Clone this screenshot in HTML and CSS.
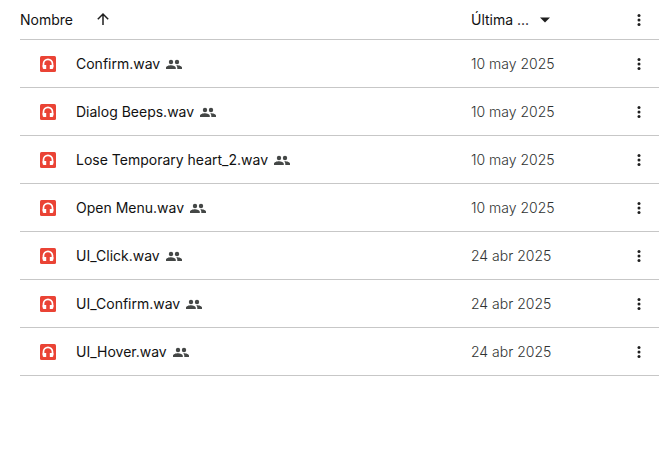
FILE: index.html
```html
<!DOCTYPE html>
<html lang="es">
<head>
<meta charset="utf-8">
<meta name="viewport" content="width=device-width, initial-scale=1">
<title>Archivos</title>
<link rel="stylesheet" href="styles.css">
</head>
<body>
<svg class="sprite" aria-hidden="true">
  <symbol id="audio" viewBox="0 0 16 16">
    <rect width="16" height="16" rx="1.5" fill="#ea4335"/>
    <path d="M3.500 11V7.800a4.500 4.500 0 0 1 9 0V11" fill="none" stroke="#fff" stroke-width="1.700"/>
    <path d="M2.650 9H6.200V13H4.100A1.450 1.450 0 0 1 2.650 11.500ZM9.800 9h3.550v2.500A1.450 1.450 0 0 1 11.900 13H9.800Z" fill="#fff"/>
  </symbol>
  <symbol id="people" viewBox="0 0 16 16">
    <circle cx="5" cy="6" r="2.200"/>
    <circle cx="11" cy="6" r="2.200"/>
    <path d="M0 13v-1.300C0 10.200 2.800 9.300 5 9.300s4.800.9 4.800 2.400V13ZM10.600 9.300c2.300-.1 5.400.8 5.400 2.400V13h-4.700v-1.300c0-1-.3-1.700-1-2.300Z"/>
  </symbol>
  <symbol id="dots" viewBox="0 0 16 16">
    <circle cx="8" cy="3.500" r="1.500"/><circle cx="8" cy="8" r="1.500"/><circle cx="8" cy="12.500" r="1.500"/>
  </symbol>
</svg>
<table class="files">
  <thead>
    <tr>
      <th scope="col"><div class="heading"><button class="sort">Nombre</button><button class="icon-button" aria-label="Orden ascendente"><svg class="arrow" viewBox="0 0 16 16"><path d="M8 13V2.500M2.800 7.200 8 2 13.200 7.200"/></svg></button></div></th>
      <th scope="col" class="date"><div class="heading modified"><button class="sort">Última ...</button><button class="icon-button" aria-label="Opciones de fecha"><svg class="icon" viewBox="0 0 16 16"><path d="M3 5.500h10L8 10.500Z"/></svg></button></div></th>
      <th scope="col" class="actions"><button class="icon-button" aria-label="Más opciones"><svg class="icon"><use href="#dots"/></svg></button></th>
    </tr>
  </thead>
  <tbody>
    <tr><td><div class="file"><svg class="type"><use href="#audio"/></svg><span>Confirm.wav</span><svg class="shared"><use href="#people"/></svg></div></td><td class="date">10 may 2025</td><td class="actions"><button class="icon-button" aria-label="Acciones de Confirm.wav"><svg class="icon"><use href="#dots"/></svg></button></td></tr>
    <tr><td><div class="file"><svg class="type"><use href="#audio"/></svg><span>Dialog Beeps.wav</span><svg class="shared"><use href="#people"/></svg></div></td><td class="date">10 may 2025</td><td class="actions"><button class="icon-button" aria-label="Acciones de Dialog Beeps.wav"><svg class="icon"><use href="#dots"/></svg></button></td></tr>
    <tr><td><div class="file"><svg class="type"><use href="#audio"/></svg><span>Lose Temporary heart_2.wav</span><svg class="shared"><use href="#people"/></svg></div></td><td class="date">10 may 2025</td><td class="actions"><button class="icon-button" aria-label="Acciones de Lose Temporary heart_2.wav"><svg class="icon"><use href="#dots"/></svg></button></td></tr>
    <tr><td><div class="file"><svg class="type"><use href="#audio"/></svg><span>Open Menu.wav</span><svg class="shared"><use href="#people"/></svg></div></td><td class="date">10 may 2025</td><td class="actions"><button class="icon-button" aria-label="Acciones de Open Menu.wav"><svg class="icon"><use href="#dots"/></svg></button></td></tr>
    <tr><td><div class="file"><svg class="type"><use href="#audio"/></svg><span>UI_Click.wav</span><svg class="shared"><use href="#people"/></svg></div></td><td class="date">24 abr 2025</td><td class="actions"><button class="icon-button" aria-label="Acciones de UI_Click.wav"><svg class="icon"><use href="#dots"/></svg></button></td></tr>
    <tr><td><div class="file"><svg class="type"><use href="#audio"/></svg><span>UI_Confirm.wav</span><svg class="shared"><use href="#people"/></svg></div></td><td class="date">24 abr 2025</td><td class="actions"><button class="icon-button" aria-label="Acciones de UI_Confirm.wav"><svg class="icon"><use href="#dots"/></svg></button></td></tr>
    <tr><td><div class="file"><svg class="type"><use href="#audio"/></svg><span>UI_Hover.wav</span><svg class="shared"><use href="#people"/></svg></div></td><td class="date">24 abr 2025</td><td class="actions"><button class="icon-button" aria-label="Acciones de UI_Hover.wav"><svg class="icon"><use href="#dots"/></svg></button></td></tr>
  </tbody>
</table>
</body>
</html>
```
FILE: styles.css
```css
body {
  margin: 0;
  padding-left: 20px;
  background: #fff;
  color: #111;
  font: 400 14px/20px Inter, Roboto, sans-serif;
}

.sprite {
  position: absolute;
  width: 0;
  height: 0;
}

.files {
  width: 100%;
  border-collapse: separate;
  border-spacing: 0;
  table-layout: fixed;
}

th,
td {
  box-sizing: border-box;
  height: 48px;
  padding: 0;
  border-bottom: 1px solid #c7c7c7;
  text-align: left;
  vertical-align: middle;
}

th {
  height: 40px;
  font-weight: 400;
}

.date {
  width: 158px;
}

td.date {
  color: #303332;
  font-weight: 300;
}

.actions {
  width: 30px;
}

.heading {
  display: flex;
  align-items: center;
  gap: 20px;
}

.modified {
  gap: 6px;
}

.file {
  display: flex;
  align-items: center;
  gap: 6px;
  padding-left: 20px;
}

button {
  padding: 0;
  border: 0;
  background: none;
  color: inherit;
  font: inherit;
  cursor: pointer;
}

.icon-button {
  display: flex;
  align-items: center;
  justify-content: center;
  width: 20px;
  height: 20px;
}

.icon,
.arrow,
.shared,
.type {
  flex: none;
  width: 16px;
  height: 16px;
}

.icon {
  fill: #1f1f1f;
}

.arrow {
  fill: none;
  stroke: #1f1f1f;
  stroke-width: 1.5px;
}

.shared {
  fill: #444746;
}

.type {
  margin-right: 14px;
}
```
